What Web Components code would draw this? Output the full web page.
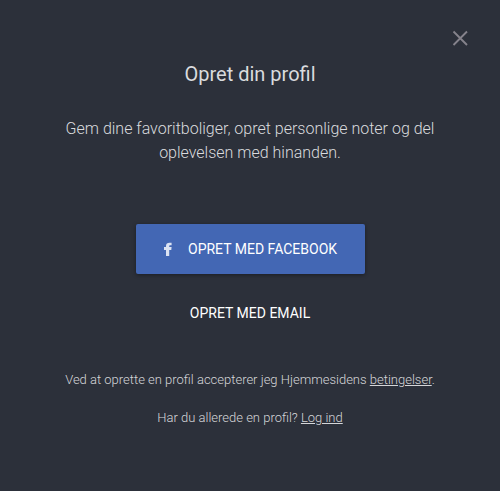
<!DOCTYPE html>
<html lang="da"><head><meta charset="utf-8"><title>Opret din profil</title>
<style>body{margin:0;background:#2c303a}</style></head><body>
<signup-dialog>
<span slot="title">Opret din profil</span>
<span slot="intro">Gem dine favoritboliger, opret personlige noter og del<br>oplevelsen med hinanden.</span>
<facebook-button>Opret med Facebook</facebook-button>
<email-button>Opret med email</email-button>
<legal-note slot="notes">Ved at oprette en profil accepterer jeg Hjemmesidens <u>betingelser</u>.</legal-note>
<legal-note slot="notes">Har du allerede en profil? <u>Log ind</u></legal-note>
</signup-dialog>
<script>
const define=(name,html)=>customElements.define(name,class extends HTMLElement{
constructor(){super();this.attachShadow({mode:'open'}).innerHTML=html;}});
define('close-icon',`<style>:host{display:block;width:16px;height:16px}svg{display:block}</style>
<svg width="16" height="16" viewBox="0 0 16 16"><path d="M1.5 1.5 15 15M15 1.5 1.5 15" stroke="#85828b" stroke-width="1.9" fill="none"/></svg>`);
define('facebook-button',`<style>:host{box-sizing:border-box;display:flex;align-items:center;width:229px;height:50px;padding-left:28.5px;gap:16px;background:#4367b4;border-radius:2px;box-shadow:0 1px 4px #0006;color:#fff;font-size:14px;line-height:20px;text-transform:uppercase;white-space:nowrap}svg{display:block}</style>
<svg width="8" height="14" viewBox="0 0 8 14"><path d="M2 14V8H0V5H2V4C2 1.8 3.3.7 5.5.7H7.6V3.2H6.4C5.5 3.2 5.2 3.5 5.2 4.1V5H7.6L7.3 8H5.2V14Z" fill="#dce3f2"/></svg><slot></slot>`);
define('email-button',`<style>:host{display:block;margin-top:29px;color:#fff;font-size:14px;line-height:20px;text-transform:uppercase}</style><slot></slot>`);
define('legal-note',`<style>:host{display:block;font-size:13px;line-height:18px;font-weight:300;color:#d5d6d9;white-space:nowrap}</style><slot></slot>`);
define('signup-dialog',`<style>
:host{box-sizing:border-box;display:flex;flex-direction:column;align-items:center;height:491px;padding-top:30px;font-family:Roboto,sans-serif;text-align:center;color:#dadbde}
header{width:100%;display:flex;justify-content:flex-end;box-sizing:border-box;padding-right:32px}
h1{margin:14px 0 0;font-size:20px;line-height:28px;font-weight:400}
p{margin:29px 0 0;font-size:16px;line-height:24px;font-weight:300;white-space:nowrap}
main{display:flex;flex-direction:column;align-items:center;margin-top:59px}
footer{display:flex;flex-direction:column;gap:20px;margin-top:48px}
</style><header><close-icon></close-icon></header><h1><slot name="title"></slot></h1><p><slot name="intro"></slot></p><main><slot></slot></main><footer><slot name="notes"></slot></footer>`);
</script></body></html>
